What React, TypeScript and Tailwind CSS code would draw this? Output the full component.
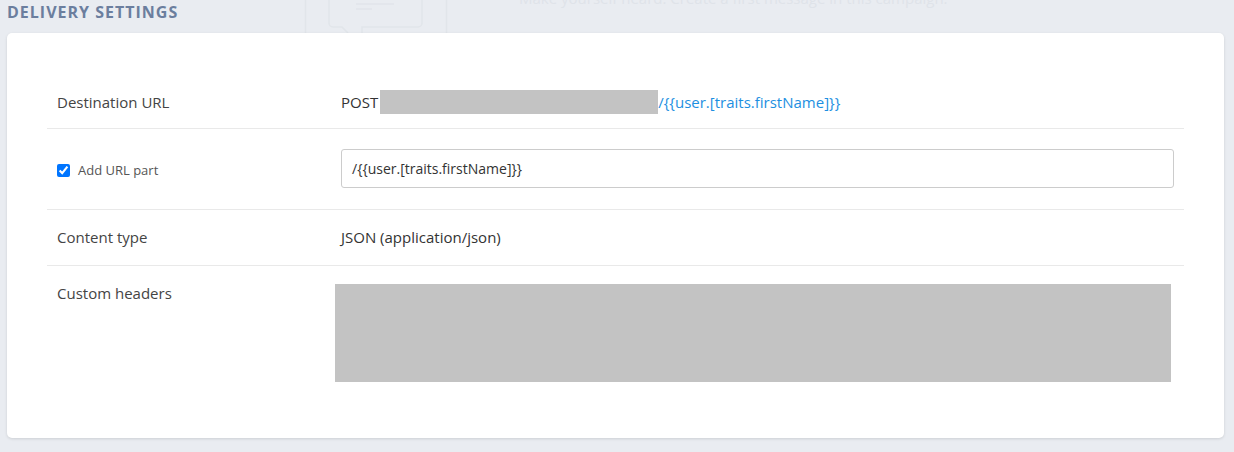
import React from "react";

export default function App() {
  const font = { fontFamily: '"Open Sans", "Noto Sans", sans-serif' };
  return (
    <div className="relative min-h-[452px] w-[1234px] overflow-hidden bg-[#e9ecf1]" style={font}>
      {/* faint backdrop of the layer behind */}
      <svg className="absolute left-0 top-0" width="1234" height="34" viewBox="0 0 1234 34" fill="none">
        <line x1="305.5" y1="0" x2="305.5" y2="34" stroke="#e1e5ea" strokeWidth="1.5" />
        <line x1="446.5" y1="0" x2="446.5" y2="34" stroke="#e1e5ea" strokeWidth="1.5" />
        <path d="M329 0 V23 a4 4 0 0 0 4 4 H342 L348 33 M362 33 V27 H418 a4 4 0 0 0 4 -4 V0" stroke="#e1e5ea" strokeWidth="1.5" />
        <line x1="356" y1="4" x2="394" y2="4" stroke="#e1e5ea" strokeWidth="1.5" />
        <line x1="356" y1="9" x2="372" y2="9" stroke="#e1e5ea" strokeWidth="1.5" />
      </svg>
      <div className="absolute left-[519px] top-[-12px] text-[15px] leading-[20px] text-[#dfe3e9] whitespace-nowrap">
        Make yourself heard. Create a first message in this campaign.
      </div>

      <div className="relative flex h-[33px] items-start pl-[7px] pt-[1px]">
        <span className="text-[16px] font-bold uppercase leading-[22px] tracking-[1px] text-[#6b7e9e]">
          Delivery Settings
        </span>
      </div>

      <div className="relative ml-[7px] mr-[10px] rounded-[5px] bg-white px-[40px] pb-[38px] pt-[40px] shadow-[0_1px_3px_rgba(0,0,0,0.12)]">
        {/* row 1 */}
        <div className="flex items-center border-b border-[#e9e9e9] px-[10px] pb-[14px] pt-[17px] text-[15px] leading-[20px]">
          <div className="w-[284px] shrink-0 text-[#444]">Destination URL</div>
          <div className="flex h-[24px] flex-1 items-center text-[#333]">
            <span>POST</span>
            <span className="ml-[2px] inline-block h-[24px] w-[278px] bg-[#c3c3c3]" />
            <span className="text-[#1d8fe1]">/{"{{"}user.[traits.firstName]{"}}"}</span>
          </div>
        </div>

        {/* row 2 */}
        <div className="flex items-center border-b border-[#e9e9e9] px-[10px] pb-[21px] pt-[20px] leading-[19px]">
          <div className="flex w-[284px] shrink-0 items-center pt-[3px]">
            <input type="checkbox" checked readOnly className="m-0 h-[13px] w-[13px] accent-[#0075ff]" />
            <span className="ml-[8px] text-[13px] text-[#555]">Add URL part</span>
          </div>
          <div className="flex-1">
            <div className="flex h-[39px] items-center rounded-[3px] border border-[#cccccc] px-[10px] text-[14px] text-[#333]">
              /{"{{"}user.[traits.firstName]{"}}"}
            </div>
          </div>
        </div>

        {/* row 3 */}
        <div className="flex items-center border-b border-[#e9e9e9] px-[10px] py-[18px] text-[15px] leading-[19px]">
          <div className="w-[284px] shrink-0 text-[#444]">Content type</div>
          <div className="flex-1 text-[#333]">JSON (application/json)</div>
        </div>

        {/* row 4 */}
        <div className="flex items-start px-[10px] py-[18px] text-[15px] leading-[19px]">
          <div className="w-[284px] shrink-0 text-[#444]">Custom headers</div>
          <div className="flex-1">
            <div className="ml-[-6px] h-[98px] w-[836px] bg-[#c3c3c3]" />
          </div>
        </div>
      </div>
    </div>
  );
}
